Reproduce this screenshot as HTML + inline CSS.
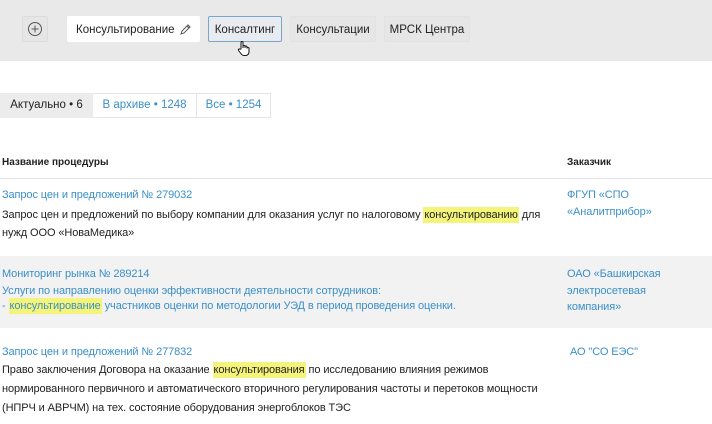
<!DOCTYPE html><html><head><meta charset="utf-8"><style>
body{margin:0;width:712px;height:424px;overflow:hidden;background:#fff;font-family:"Liberation Sans",sans-serif;font-size:11px;color:#222;position:relative}
.a{position:absolute;white-space:nowrap}
.bar{position:absolute;left:0;top:0;width:712px;height:61px;background:#e9e9e9}
.btn{position:absolute;top:16px;height:26px;line-height:26px;font-size:11.5px;color:#222;box-sizing:border-box;text-align:center;background:#e6e6e6;border:1px solid #e2e2e2;border-radius:2px}
.l{color:#3a8fc8}
.h{background:#f4f47a;padding:2px 1px}
.t{letter-spacing:-0.1px}
</style></head><body>
<div class="bar"></div>
<div class="btn" style="left:22px;width:26px;border-color:#dcdcdc">
<svg width="16" height="16" viewBox="0 0 16 16" style="margin-top:4px"><circle cx="8" cy="8" r="6.5" fill="none" stroke="#555" stroke-width="1"/><path d="M8 4.5v7M4.5 8h7" stroke="#555" stroke-width="1"/></svg></div>
<div class="btn" style="left:67px;width:133px;background:#fff;border-color:#fff;text-align:left;padding-left:8px">Консультирование
<svg width="13" height="13" viewBox="0 0 13 13" style="position:absolute;left:111px;top:6px"><path d="M2 11l1-3 6-6 2 2-6 6z M8 3l2 2" fill="none" stroke="#555" stroke-width="1"/></svg></div>
<div class="btn" style="left:208px;width:74px;border-color:#7aa6cc;background:#e8ecf0">Консалтинг</div>
<div class="btn" style="left:290px;width:86px">Консультации</div>
<div class="btn" style="left:384px;width:86px">МРСК Центра</div>
<svg class="a" style="left:237px;top:40px" width="14" height="17" viewBox="0 0 14 17"><path d="M4 9V2.5a1 1 0 0 1 2 0V8V6.5a1 1 0 0 1 2 0V8V7a1 1 0 0 1 2 0v1.5a1 1 0 0 1 2 0V12c0 2-1.5 3.5-3.5 3.5H7C5.5 15.5 4.5 14.5 3.5 13L1.5 10.5a1 1 0 0 1 1.5-1.3z" fill="#fff" stroke="#111" stroke-width="1"/></svg>
<div class="a" style="left:0;top:93px;width:271px;height:25px;border:1px solid #e4e4e4;box-sizing:border-box"></div>
<div class="a" style="left:0;top:93px;width:93px;height:25px;background:#ececec;line-height:25px;text-align:center;font-size:11.5px">Актуально • 6</div>
<div class="a l" style="left:93px;top:93px;width:103px;line-height:25px;text-align:center;font-size:11.5px;border-right:1px solid #e4e4e4">В архиве • 1248</div>
<div class="a l" style="left:196px;top:93px;width:75px;line-height:25px;text-align:center;font-size:11.5px">Все • 1254</div>
<div class="a" style="left:2px;top:157px;font-size:10px;font-weight:bold">Название процедуры</div>
<div class="a" style="left:567px;top:157px;font-size:10px;font-weight:bold">Заказчик</div>
<div class="a" style="left:0;top:178px;width:712px;height:1px;background:#e2e2e2"></div>
<div class="a l t" style="left:2px;top:189px">Запрос цен и предложений № 279032</div>
<div class="a t" style="left:2px;top:209px">Запрос цен и предложений по выбору компании для оказания услуг по налоговому <span class="h">консультированию</span> для</div>
<div class="a t" style="left:2px;top:227px">нужд ООО «НоваМедика»</div>
<div class="a l t" style="left:567px;top:189px">ФГУП «СПО</div>
<div class="a l t" style="left:567px;top:206px">«Аналитприбор»</div>
<div class="a" style="left:0;top:256px;width:712px;height:72px;background:#f2f2f2"></div>
<div class="a l t" style="left:2px;top:268px">Мониторинг рынка № 289214</div>
<div class="a l t" style="left:2px;top:285px">Услуги по направлению оценки эффективности деятельности сотрудников:</div>
<div class="a l t" style="left:2px;top:300px">- <span class="h">консультирование</span> участников оценки по методологии УЭД в период проведения оценки.</div>
<div class="a l t" style="left:567px;top:268px">ОАО «Башкирская</div>
<div class="a l t" style="left:567px;top:285px">электросетевая</div>
<div class="a l t" style="left:567px;top:301px">компания»</div>
<div class="a l t" style="left:2px;top:346px">Запрос цен и предложений № 277832</div>
<div class="a t" style="left:2px;top:364px">Право заключения Договора на оказание <span class="h">консультирования</span> по исследованию влияния режимов</div>
<div class="a t" style="left:2px;top:383px">нормированного первичного и автоматического вторичного регулирования частоты и перетоков мощности</div>
<div class="a t" style="left:2px;top:402px">(НПРЧ и АВРЧМ) на тех. состояние оборудования энергоблоков ТЭС</div>
<div class="a l t" style="left:570px;top:346px">АО "СО ЕЭС"</div>
</body></html>
